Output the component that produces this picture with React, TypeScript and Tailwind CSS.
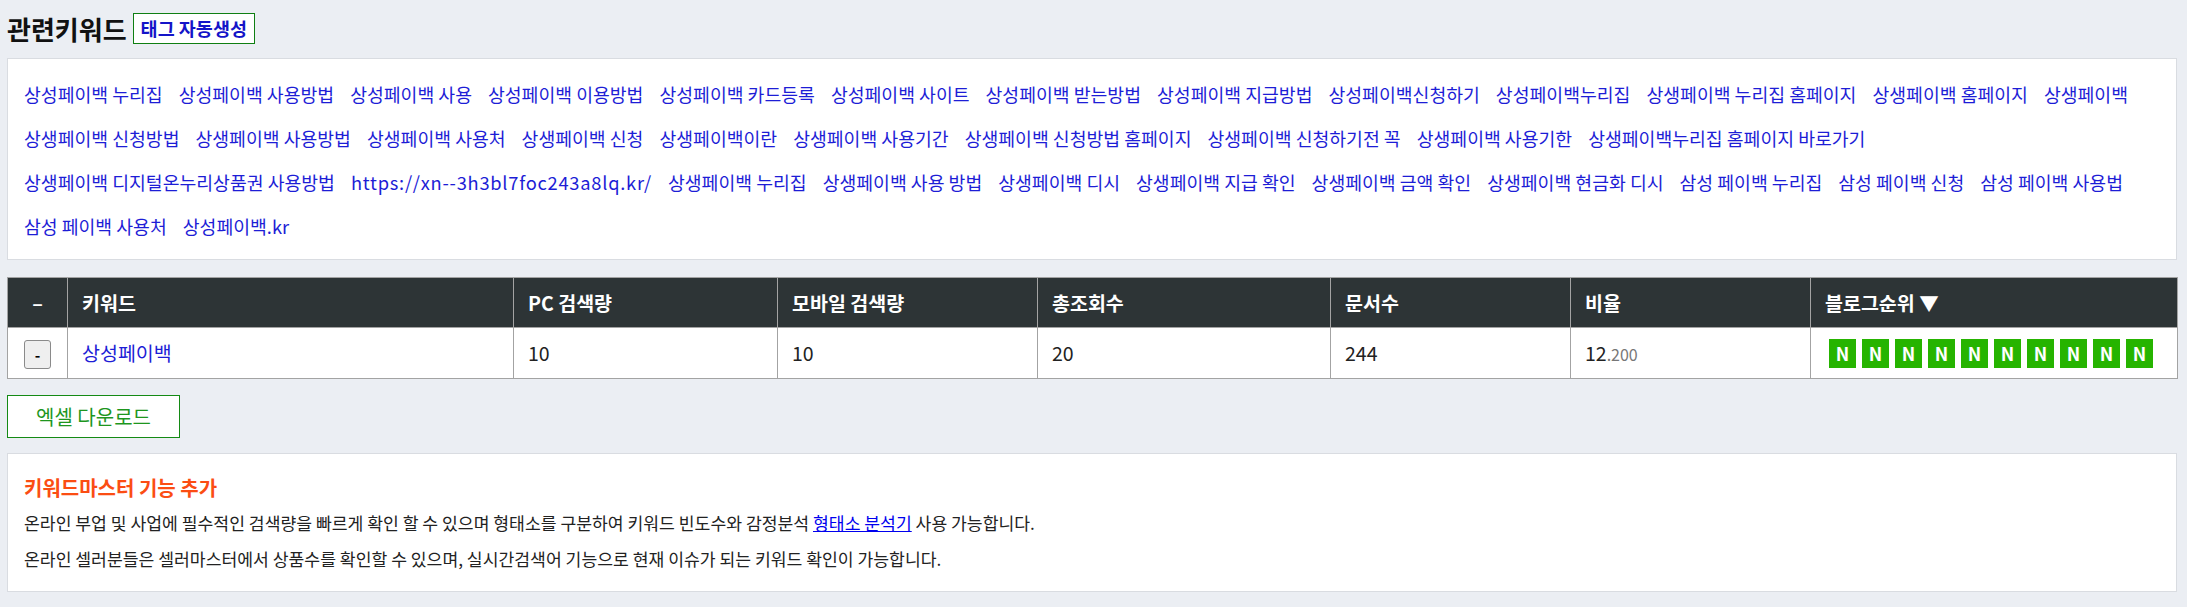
import React from "react";

const keywords: string[] = [
  "상성페이백 누리집",
  "상성페이백 사용방법",
  "상성페이백 사용",
  "상성페이백 이용방법",
  "상성페이백 카드등록",
  "상성페이백 사이트",
  "상성페이백 받는방법",
  "상성페이백 지급방법",
  "상성페이백신청하기",
  "상성페이백누리집",
  "상생페이백 누리집 홈페이지",
  "상생페이백 홈페이지",
  "상생페이백",
  "상생페이백 신청방법",
  "상생페이백 사용방법",
  "상생페이백 사용처",
  "상생페이백 신청",
  "상생페이백이란",
  "상생페이백 사용기간",
  "상생페이백 신청방법 홈페이지",
  "상생페이백 신청하기전 꼭",
  "상생페이백 사용기한",
  "상생페이백누리집 홈페이지 바로가기",
  "상생페이백 디지털온누리상품권 사용방법",
  "https://xn--3h3bl7foc243a8lq.kr/",
  "상생페이백 누리집",
  "상생페이백 사용 방법",
  "상생페이백 디시",
  "상생페이백 지급 확인",
  "상생페이백 금액 확인",
  "상생페이백 현금화 디시",
  "삼성 페이백 누리집",
  "삼성 페이백 신청",
  "삼성 페이백 사용법",
  "삼성 페이백 사용처",
  "상성페이백.kr",
];

export default function App() {
  return (
    <div className="min-h-[607px] bg-[#ebeef3] pl-[7px] pr-[10px] pt-[13px] pb-[16px] font-['Noto_Sans_CJK_KR','Noto_Sans',sans-serif] text-[#222]">
      <div className="flex h-[31px] items-center">
        <h2 className="text-[26px] font-bold leading-[31px] text-[#111]">관련키워드</h2>
        <span className="ml-[6px] h-[31px] border border-[#0f7f12] bg-white px-[7px] text-[18.5px] font-bold leading-[29px] text-[#1414c8]">
          태그 자동생성
        </span>
      </div>

      <div className="mt-[14px] border border-[#d9dce1] bg-white pl-4 pr-4 pt-[13px] pb-[11px]">
        <div className="flex flex-wrap gap-x-[16px]">
          {keywords.map((k) => (
            <a
              key={k}
              className={
                k.startsWith("http")
                  ? "whitespace-nowrap text-[18.3px] leading-[44px] tracking-[0.75px] text-[#1d1dd6]"
                  : "whitespace-nowrap text-[18.3px] leading-[44px] text-[#1d1dd6]"
              }
            >
              {k}
            </a>
          ))}
        </div>
      </div>

      <table className="mt-[17px] w-[2170px] table-fixed border-collapse border border-[#a3a3a3]">
        <colgroup>
          <col className="w-[60px]" />
          <col className="w-[446px]" />
          <col className="w-[264px]" />
          <col className="w-[260px]" />
          <col className="w-[293px]" />
          <col className="w-[240px]" />
          <col className="w-[240px]" />
          <col className="w-[367px]" />
        </colgroup>
        <thead>
          <tr className="h-[50px] bg-[#2d3436] text-left text-[19.5px] font-bold text-white">
            <th className="border border-[#a3a3a3] text-center">–</th>
            <th className="border border-[#a3a3a3] px-[14px]">키워드</th>
            <th className="border border-[#a3a3a3] px-[14px]">PC 검색량</th>
            <th className="border border-[#a3a3a3] px-[14px]">모바일 검색량</th>
            <th className="border border-[#a3a3a3] px-[14px]">총조회수</th>
            <th className="border border-[#a3a3a3] px-[14px]">문서수</th>
            <th className="border border-[#a3a3a3] px-[14px]">비율</th>
            <th className="border border-[#a3a3a3] px-[14px]">블로그순위 ▼</th>
          </tr>
        </thead>
        <tbody>
          <tr className="h-[51px] bg-white text-[19.5px]">
            <td className="border border-[#a3a3a3] text-center">
              <button className="inline-flex h-[29px] w-[27px] items-center justify-center rounded-[3px] border border-[#8a8a8a] bg-[#efefef] text-[15px] font-bold leading-none text-black">
                -
              </button>
            </td>
            <td className="border border-[#a3a3a3] px-[14px]">
              <a className="text-[#1d1dd6]">상성페이백</a>
            </td>
            <td className="border border-[#a3a3a3] px-[14px]">10</td>
            <td className="border border-[#a3a3a3] px-[14px]">10</td>
            <td className="border border-[#a3a3a3] px-[14px]">20</td>
            <td className="border border-[#a3a3a3] px-[14px]">244</td>
            <td className="border border-[#a3a3a3] px-[14px]">
              12<span className="text-[16px] text-[#777]">.200</span>
            </td>
            <td className="border border-[#a3a3a3] pl-[18px]">
              <div className="flex gap-[6px]">
                {Array.from({ length: 10 }).map((_, i) => (
                  <span
                    key={i}
                    className="flex h-[29px] w-[27px] items-center justify-center bg-[#26b400] text-[18px] font-bold text-white"
                  >
                    N
                  </span>
                ))}
              </div>
            </td>
          </tr>
        </tbody>
      </table>

      <button className="mt-[16px] block h-[43px] w-[173px] border border-[#148a14] bg-white text-[20px] text-[#1e961e]">
        엑셀 다운로드
      </button>

      <div className="mt-[15px] border border-[#d9dce1] bg-white px-4 pt-[20px] pb-[14px]">
        <h3 className="mb-[3px] text-[20px] font-bold leading-[28px] text-[#fb4d13]">키워드마스터 기능 추가</h3>
        <p className="text-[17.2px] leading-[36px] text-[#222]">
          온라인 부업 및 사업에 필수적인 검색량을 빠르게 확인 할 수 있으며 형태소를 구분하여 키워드 빈도수와 감정분석{" "}
          <a className="text-[#0000ee] underline">형태소 분석기</a> 사용 가능합니다.
        </p>
        <p className="text-[17.2px] leading-[36px] text-[#222]">
          온라인 셀러분들은 셀러마스터에서 상품수를 확인할 수 있으며, 실시간검색어 기능으로 현재 이슈가 되는 키워드 확인이 가능합니다.
        </p>
      </div>
    </div>
  );
}
